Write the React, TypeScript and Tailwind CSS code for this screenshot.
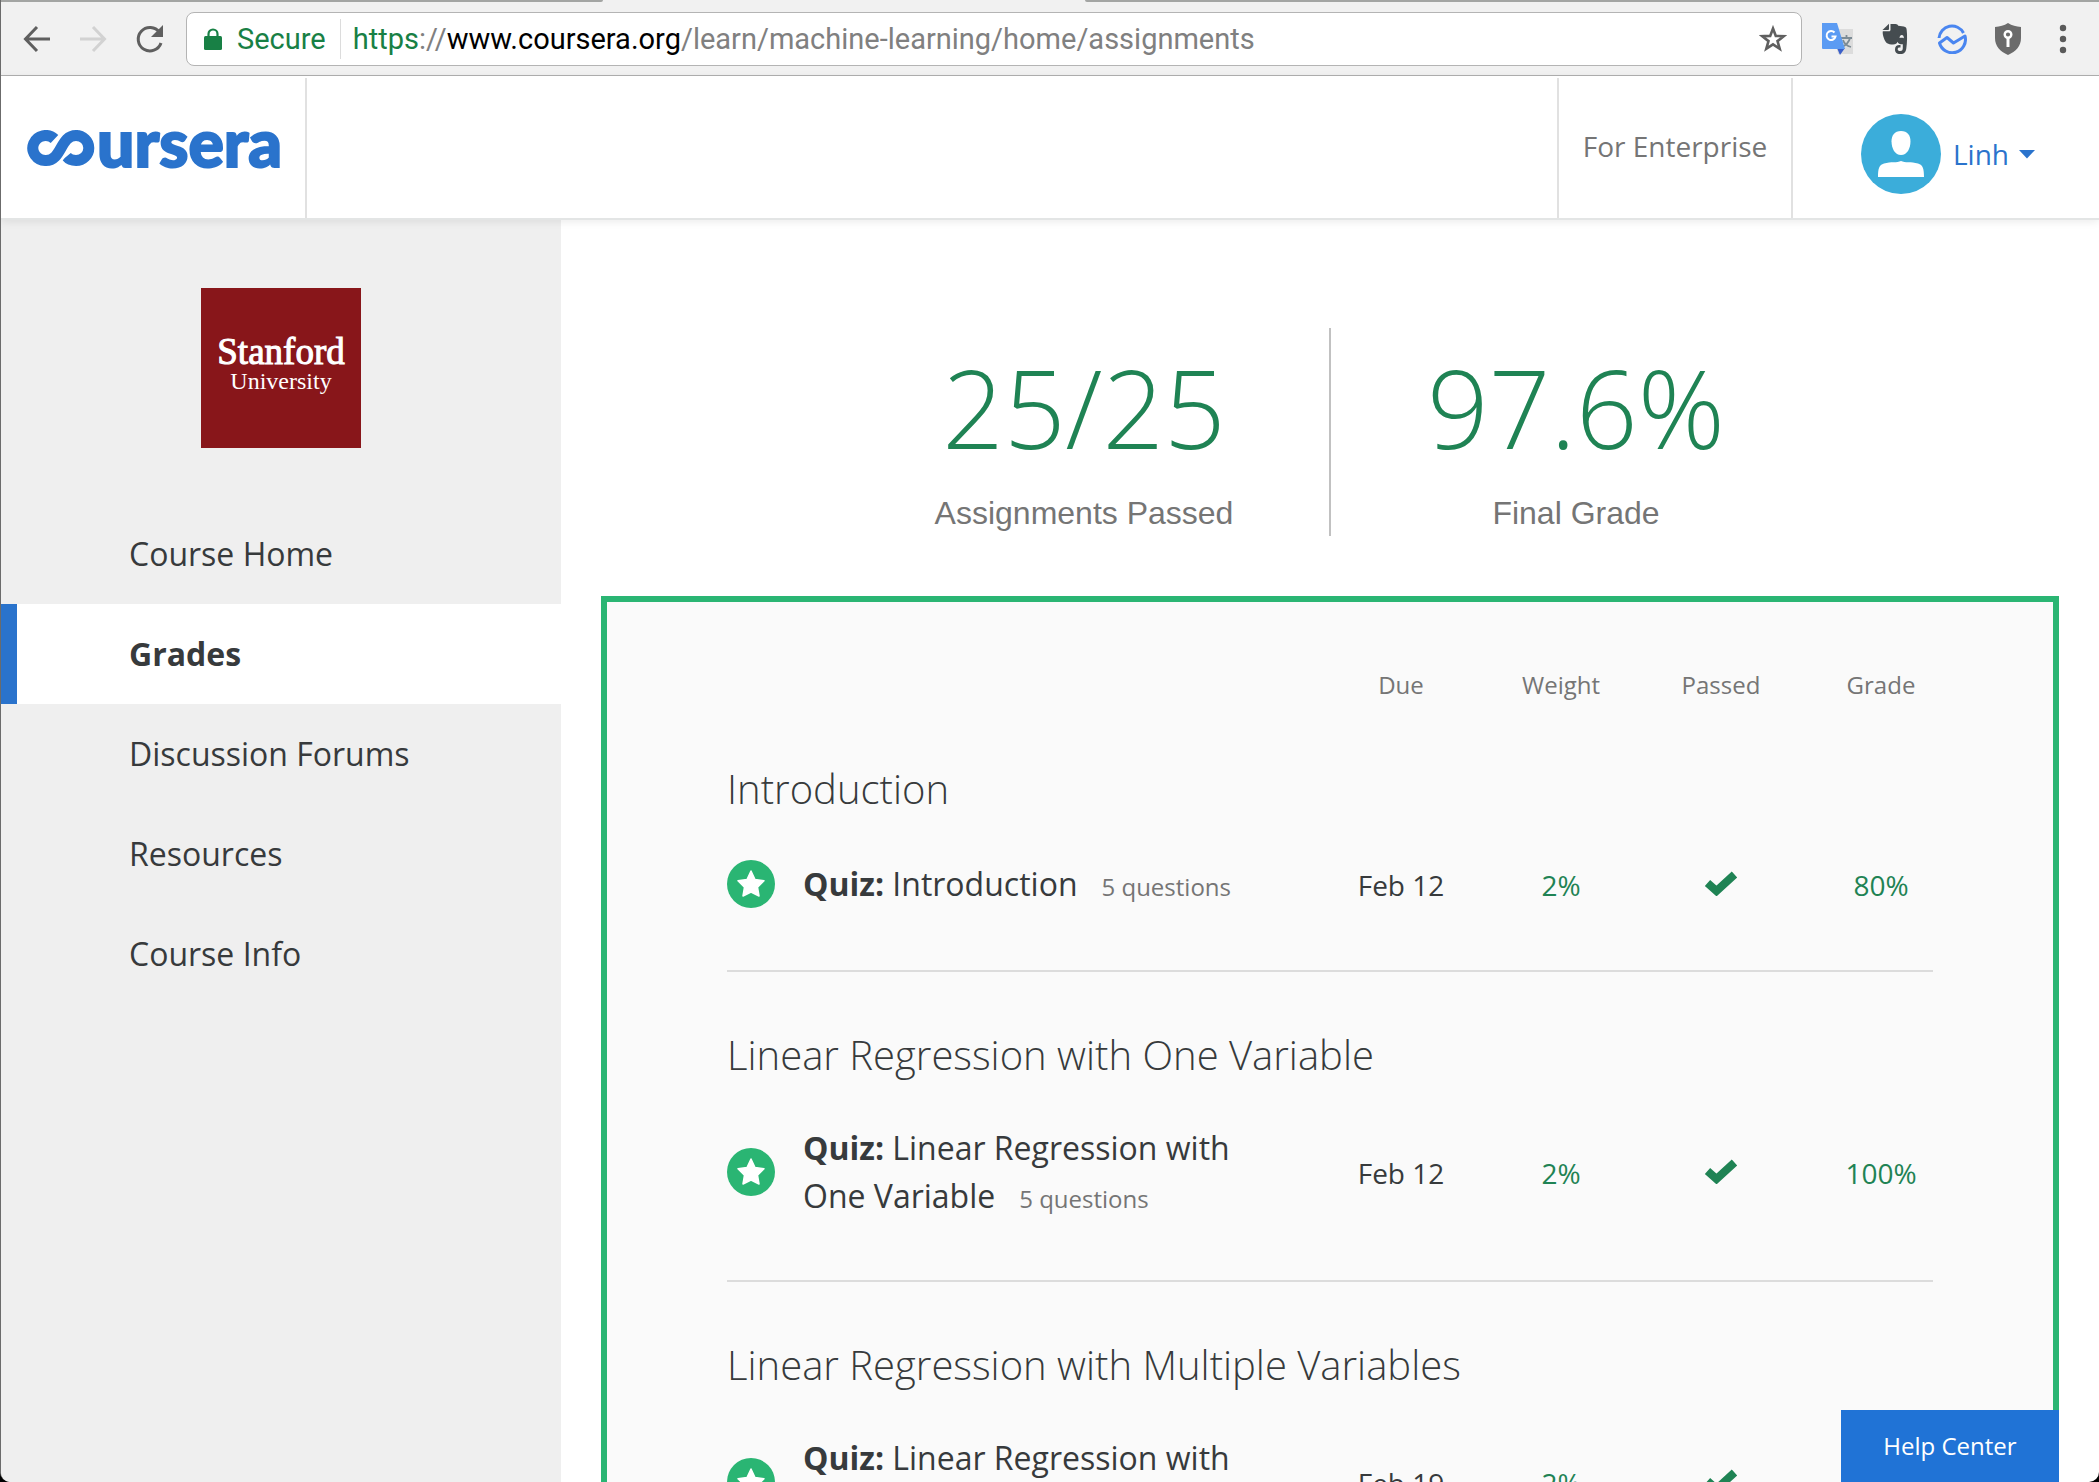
import React from "react";

const modules = [
  { title: "Introduction", quiz: "Introduction", questions: 5, due: "Feb 12", weight: "2%", grade: "80%" },
  { title: "Linear Regression with One Variable", quiz: "Linear Regression with One Variable", questions: 5, due: "Feb 12", weight: "2%", grade: "100%" },
  { title: "Linear Regression with Multiple Variables", quiz: "Linear Regression with Multiple Variables", questions: 5, due: "Feb 19", weight: "2%", grade: "100%" },
];

const nav = ["Course Home", "Grades", "Discussion Forums", "Resources", "Course Info"];

function BackIcon({ flip = false }: { flip?: boolean }) {
  return (
    <svg width="28" height="28" viewBox="0 0 28 28" fill="none" stroke="currentColor" strokeWidth="3" className={flip ? "rotate-180" : ""}>
      <path d="M27 14H3M14 2 2.500 14 14 26" />
    </svg>
  );
}

function TabStrip() {
  return (
    <div className="flex h-0.5 shrink-0 bg-[#f1f1f1]">
      <div className="w-[602px] rounded-br-sm bg-[#a3a5a3]" />
      <div className="w-[482px]" />
      <div className="flex-1 rounded-bl-sm bg-[#a3a5a3]" />
    </div>
  );
}

function BrowserBar() {
  return (
    <div className="flex h-[74px] shrink-0 items-center border-b border-b-[#b0b0b0] bg-[#f1f1f1] pl-[22px]">
      <button aria-label="Back" className="text-[#5f5f5f]"><BackIcon /></button>
      <button aria-label="Forward" className="ml-7 text-[#d2d2d2]"><BackIcon flip /></button>
      <button aria-label="Reload" className="ml-7 text-[#5f5f5f]">
        <svg width="30" height="30" viewBox="0 0 30 30" fill="none">
          <path d="M24.500 8.500A11.700 11.700 0 1 0 26 19" stroke="currentColor" strokeWidth="3" />
          <path d="M28 1v12H16z" fill="currentColor" />
        </svg>
      </button>
      <div className="ml-[21px] flex h-[54px] flex-1 items-center rounded-lg border border-[#b4b4b4] bg-white pl-[17px] pr-[14px] font-['Roboto',sans-serif] text-[29px] leading-9">
        <svg width="18" height="22" viewBox="0 0 18 22">
          <rect x="0" y="8" width="18" height="14" rx="1.500" fill="#188045" />
          <path d="M4.500 9V6a4.500 4.500 0 0 1 9 0v3" fill="none" stroke="#188045" strokeWidth="2.200" />
        </svg>
        <span className="ml-[15px] text-[#188045]">Secure</span>
        <span className="ml-[14px] mr-3 h-10 w-px bg-[#dcdcdc]" />
        <div className="flex-1 text-[#808080]">
          <span className="text-[#188045]">https</span>://<span className="text-black">www.coursera.org</span>/learn/machine-learning/home/assignments
        </div>
        <button aria-label="Bookmark this page">
          <svg width="28" height="28" viewBox="0 0 28 28" fill="none" stroke="#5f5f5f" strokeWidth="2.600">
            <path d="M14 3.500 16.800 10.900 24.800 11.200 18.500 16.100 20.700 23.800 14 19.300 7.300 23.800 9.500 16.100 3.200 11.200 11.200 10.900z" />
          </svg>
        </button>
      </div>
      <div className="flex items-center gap-[26px] pl-[19px] pr-8">
        <button aria-label="Translate">
          <svg width="34" height="34" viewBox="0 0 34 34">
            <path d="M12 7h20v25H17z" fill="#dcdcdc" />
            <path d="M20 16h11M25.500 13v3M29 16c-1 4-4 7-8 9M22 18c1 3 4 6 8 7" stroke="#7c8b95" strokeWidth="1.800" fill="none" />
            <path d="M16 26h8l-5 7z" fill="#3a5fc9" />
            <path d="M1 1h15l8 26H2a1 1 0 0 1-1-1z" fill="#5b9bf3" />
            <path d="M13.500 10.500A4.500 4.500 0 1 0 14.500 14.500H10.500" stroke="#fff" strokeWidth="2" fill="none" />
          </svg>
        </button>
        <button aria-label="Web clipper">
          <svg width="30" height="32" viewBox="0 0 30 32" fill="#454c50">
            <path d="M1.500 7 8 .8V6a1 1 0 0 1-1 1z" />
            <path d="M9.500 1h5c1.500 0 2.500 1 2.800 1.800l5.500.8c2 .3 2.700 1.500 2.900 3.400.6 5 .5 13-.4 18.500-.5 3.500-1.800 5.500-6 5.500-4 0-5.300-2-5.300-4.600 0-3 1.800-4.400 4.300-4.400h1.200v2.500h-1c-1.200 0-1.800.7-1.800 1.700s.8 1.800 2.600 1.800c2 0 2.500-1 2.500-3.500v-3.200c-2.500.2-4.500-.5-5.300-2.500-.5 2-2 2.700-4.500 2.700-5 0-7.500-1.500-9-6C1.800 12.500 1.500 10 1.800 8.300H8c1 0 1.500-.6 1.500-1.500z" />
            <path d="M18.500 15c.2-2 1-3 2.300-3s2 1.200 2 3.200c-1.500-.6-2.800-.6-4.300-.2z" fill="#f1f1f1" />
          </svg>
        </button>
        <button aria-label="Mail tracker">
          <svg width="30" height="30" viewBox="0 0 30 30" fill="none" stroke="#4a86f0" strokeWidth="3">
            <path d="M2 14A13 13 0 0 1 26.500 9" />
            <path d="M28 12A13 13 0 1 1 2.500 19L10 13.500 16.500 19z" strokeLinejoin="round" />
          </svg>
        </button>
        <button aria-label="Password shield">
          <svg width="30" height="34" viewBox="0 0 30 34">
            <path d="M15 1c4 2.500 8 3.700 13 4v11c0 8-5 13.500-13 17C7 29.500 2 24 2 16V5c5-.3 9-1.500 13-4z" fill="#6b6b6b" />
            <circle cx="15" cy="12.500" r="3.300" fill="none" stroke="#fff" strokeWidth="2.400" />
            <path d="M15 16v9" stroke="#fff" strokeWidth="3" />
          </svg>
        </button>
        <button aria-label="Menu" className="flex w-[18px] justify-end">
          <svg width="8" height="30" viewBox="0 0 8 30" fill="#5a5a5a">
            <circle cx="4" cy="4" r="3.200" /><circle cx="4" cy="15" r="3.200" /><circle cx="4" cy="26" r="3.200" />
          </svg>
        </button>
      </div>
    </div>
  );
}

function Header() {
  return (
    <header className="relative z-10 flex h-36 shrink-0 items-stretch border-b-2 border-[#e3e5e5] bg-white pt-0.5 shadow-[0_2px_8px_rgba(0,0,0,0.08)]">
      <a href="#" aria-label="coursera" className="flex w-[306px] items-center border-r-2 border-[#e1e1e1] pl-[26px] text-[#2a73cc]">
        <svg width="70" height="36" viewBox="0 0 70 36" fill="none">
          <path d="M49 5.500A12.800 12.500 0 1 1 49 30.500C45 30.500 42 29.500 39.500 26.500" stroke="currentColor" strokeWidth="11" />
          <path d="M26 30C36 25 35 5.500 49 5.500" stroke="#fff" strokeWidth="14" />
          <path d="M27.500 9A12.800 12.500 0 1 0 19 30.500C35 30.500 33 5.500 49 5.500H51" stroke="currentColor" strokeWidth="11" />
        </svg>
        <span className="pb-3 font-['Lato',sans-serif] text-[66px] font-black leading-[66px] [-webkit-text-stroke:2px_currentColor]">ursera</span>
      </a>
      <div className="flex-1" />
      <a href="#" className="flex w-[236px] items-center justify-center border-x-2 border-[#e1e1e1] pb-1 text-[28px] text-[#757575]">For Enterprise</a>
      <button className="flex w-[306px] items-center pl-[68px] pt-3 text-[28px] text-[#2a73cc]">
        <svg width="80" height="80" viewBox="0 0 80 80">
          <circle cx="40" cy="40" r="40" fill="#3badda" />
          <path d="M40 17c6.500 0 9.500 4.500 9.500 10.500 0 7-3.500 13.500-9.500 13.500s-9.500-6.500-9.500-13.500C30.500 21.500 33.500 17 40 17z" fill="#fff" />
          <path d="M17 63c0-8 1-12 6-13.500C30 47.500 36 49 40 47c4 2 10 .5 17 2.500 5 1.500 6 5.500 6 13.500z" fill="#fff" />
        </svg>
        <span className="ml-3">Linh</span>
        <svg width="16" height="9" viewBox="0 0 16 9" className="ml-[10px]"><path d="M0 0h16L8 8.500z" fill="currentColor" /></svg>
      </button>
    </header>
  );
}

function Sidebar() {
  return (
    <aside className="flex w-[560px] shrink-0 flex-col items-center bg-[#efefef] pt-[68px]">
      <div className="flex size-40 flex-col items-center justify-center bg-[#88161a] pb-2 font-['Liberation_Serif',serif] text-white">
        <span className="text-[37px] leading-[34px] [-webkit-text-stroke:1px_currentColor]">Stanford</span>
        <span className="text-[24px] leading-6">University</span>
      </div>
      <nav className="mt-14 w-full">
        {nav.map((item) => (
          <a
            key={item}
            href="#"
            className={
              item === "Grades"
                ? "flex h-[100px] items-center border-l-16 border-[#2a73cc] bg-white pl-28 text-[32px] font-bold"
                : "flex h-[100px] items-center pl-32 text-[32px]"
            }
          >
            {item}
          </a>
        ))}
      </nav>
    </aside>
  );
}

function Stat({ value, label }: { value: string; label: string }) {
  return (
    <div className="flex w-[490px] flex-col items-center pt-5">
      <div className="text-[108px] font-light leading-[120px] text-[#1f8354]">{value}</div>
      <div className="mt-[25px] font-['Liberation_Sans',sans-serif] text-[32px] leading-10 text-[#757575]">{label}</div>
    </div>
  );
}

function Star() {
  return (
    <svg width="48" height="48" viewBox="0 0 48 48" className="shrink-0">
      <circle cx="24" cy="24" r="24" fill="#2ab573" />
      <path d="M24 11 28 19.500 37 20.700 30.500 27.200 32 36 24 32 16 36 17.500 27.200 11 20.700 20 19.500z" fill="#fff" stroke="#fff" strokeWidth="1.500" strokeLinejoin="round" />
    </svg>
  );
}

function Grades() {
  return (
    <div className="mt-[60px] border-6 border-b-0 border-[#2ab573] bg-[#fafafa] px-[120px]">
      <table className="w-full table-fixed">
        <colgroup>
          <col /><col className="w-40" /><col className="w-40" /><col className="w-40" /><col className="w-[132px]" />
        </colgroup>
        <thead className="text-[24px] leading-9 text-[#757575]">
          <tr>
            <th aria-label="Assignment" />
            <th className="pt-[65px] pb-[3px] font-normal">Due</th>
            <th className="pt-[65px] pb-[3px] font-normal">Weight</th>
            <th className="pt-[65px] pb-[3px] font-normal">Passed</th>
            <th className="pt-[65px] pb-[3px] pl-7 font-normal">Grade</th>
          </tr>
        </thead>
        {modules.map((m) => (
          <tbody key={m.title} className="border-b-2 border-[#dcdcdc] text-center text-[28px] leading-10">
            <tr>
              <th colSpan={5} scope="rowgroup" className="pt-[59px] pb-11 text-left text-[40px] font-light leading-[48px]">{m.title}</th>
            </tr>
            <tr>
              <td className="pb-[60px] pt-px pr-10 text-left">
                <div className="flex min-h-[52px] items-center gap-7">
                  <Star />
                  <div className="text-[32px] leading-[48px]">
                    <b>Quiz:</b> {m.quiz}
                    <span className="ml-6 whitespace-nowrap text-[24px] leading-6 text-[#757575]">{m.questions} questions</span>
                  </div>
                </div>
              </td>
              <td className="pb-[61px] pt-1">{m.due}</td>
              <td className="pb-[61px] pt-1 font-medium text-[#1f8354]">{m.weight}</td>
              <td className="pb-[61px] pt-0">
                <svg role="img" aria-label="Passed" width="34" height="26" viewBox="0 0 34 26" className="mx-auto">
                  <path d="M3.500 13 12.500 21 30.500 4.500" fill="none" stroke="#1f8354" strokeWidth="8" strokeLinejoin="miter" />
                </svg>
              </td>
              <td className="pb-[61px] pl-7 pt-1 font-medium text-[#1f8354]">{m.grade}</td>
            </tr>
          </tbody>
        ))}
      </table>
    </div>
  );
}

export default function App() {
  return (
    <div className="bg-black">
      <div className="relative flex h-screen flex-col overflow-hidden rounded-b-[10px] border-l border-[#6b6b6b] bg-white font-['Open_Sans',sans-serif] text-[#373a3c]">
        <TabStrip />
        <BrowserBar />
        <Header />
        <div className="flex min-h-0 flex-1">
          <Sidebar />
          <main className="min-w-0 flex-1 overflow-hidden px-10 pt-[108px]">
            <div className="flex justify-center">
              <Stat value="25/25" label="Assignments Passed" />
              <div className="h-[208px] w-0.5 bg-[#c1c1c1]" />
              <Stat value="97.6%" label="Final Grade" />
            </div>
            <Grades />
          </main>
        </div>
        <button className="absolute bottom-0 right-10 h-[72px] w-[218px] bg-[#2073d6] text-[24px] font-medium text-white">Help Center</button>
      </div>
    </div>
  );
}
